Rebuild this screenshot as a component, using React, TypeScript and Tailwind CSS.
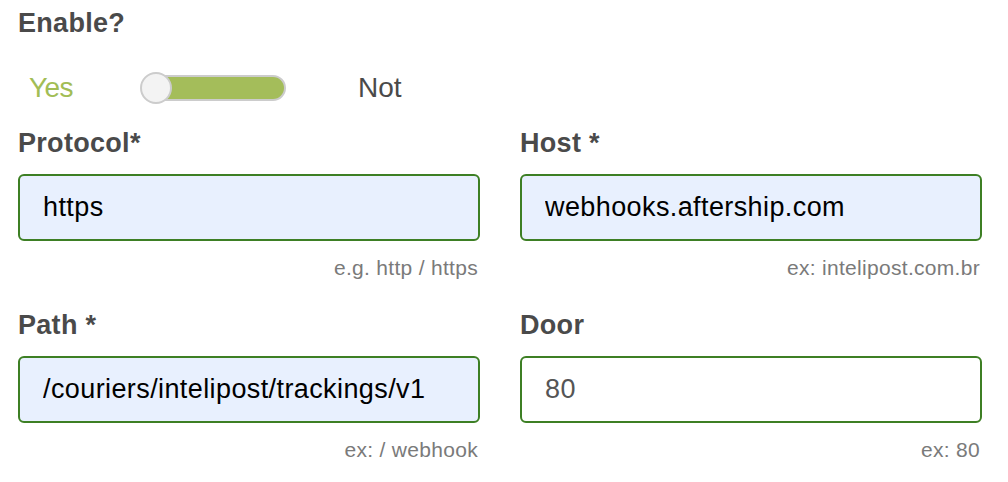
import { useState } from "react";

type Field = {
  label: string;
  value: string;
  hint: string;
  filled: boolean;
};

const rows: Field[][] = [
  [
    { label: "Protocol*", value: "https", hint: "e.g. http / https", filled: true },
    { label: "Host *", value: "webhooks.aftership.com", hint: "ex: intelipost.com.br", filled: true },
  ],
  [
    { label: "Path *", value: "/couriers/intelipost/trackings/v1", hint: "ex: / webhook", filled: true },
    { label: "Door", value: "80", hint: "ex: 80", filled: false },
  ],
];

function FormField({ field }: { field: Field }) {
  return (
    <div className="flex flex-col">
      <label className="text-[27px] leading-[30px] font-bold tracking-[0.3px] text-[#4a4a4a]">
        {field.label}
      </label>
      <input
        readOnly
        value={field.value}
        className={`mt-4 h-[67px] w-full rounded-[6px] border-2 border-[#3d7f24] px-[23px] text-[27px] tracking-[0.4px] outline-none ${
          field.filled ? "bg-[#e8f0fe] text-black" : "bg-white text-[#555]"
        }`}
      />
      <p className="mt-[15px] pr-[2px] text-right text-[21px] leading-6 tracking-[0.3px] text-[#7a7a7a]">
        {field.hint}
      </p>
    </div>
  );
}

export default function App() {
  const [enabled, setEnabled] = useState(true);

  return (
    <div
      className="w-[1008px] h-[482px] bg-white pl-[18px] pr-[26px] pt-2 overflow-hidden"
      style={{ fontFamily: '"Liberation Sans", Arial, sans-serif' }}
    >
      <h2 className="text-[27px] leading-[30px] font-bold tracking-[0.3px] text-[#4a4a4a]">Enable?</h2>

      {/* Yes / Not switch */}
      <div className="mt-[34px] flex h-8 items-center">
        <span className="ml-[11px] w-[112px] text-[28px] leading-8 tracking-[-0.6px] text-[#a2bd55]">Yes</span>
        <button
          onClick={() => setEnabled(!enabled)}
          className="relative flex h-8 w-[145px] items-center cursor-pointer"
        >
          <span
            className={`h-[26px] w-full rounded-full border-2 border-[#cccccc] ${
              enabled ? "bg-[#a4bd5a]" : "bg-[#e5e5e5]"
            }`}
          />
          <span
            className={`absolute top-0 size-8 rounded-full border-2 border-[#cccccc] bg-[#f3f3f3] ${
              enabled ? "left-[-1px]" : "right-[-1px]"
            }`}
          />
        </button>
        <span className="ml-[72px] text-[28px] leading-8 text-[#4a4a4a]">Not</span>
      </div>

      <div className="mt-6 flex flex-col gap-[30px]">
        {rows.map((row, i) => (
          <div key={i} className="grid grid-cols-2 gap-10">
            {row.map((f) => (
              <FormField key={f.label} field={f} />
            ))}
          </div>
        ))}
      </div>
    </div>
  );
}
